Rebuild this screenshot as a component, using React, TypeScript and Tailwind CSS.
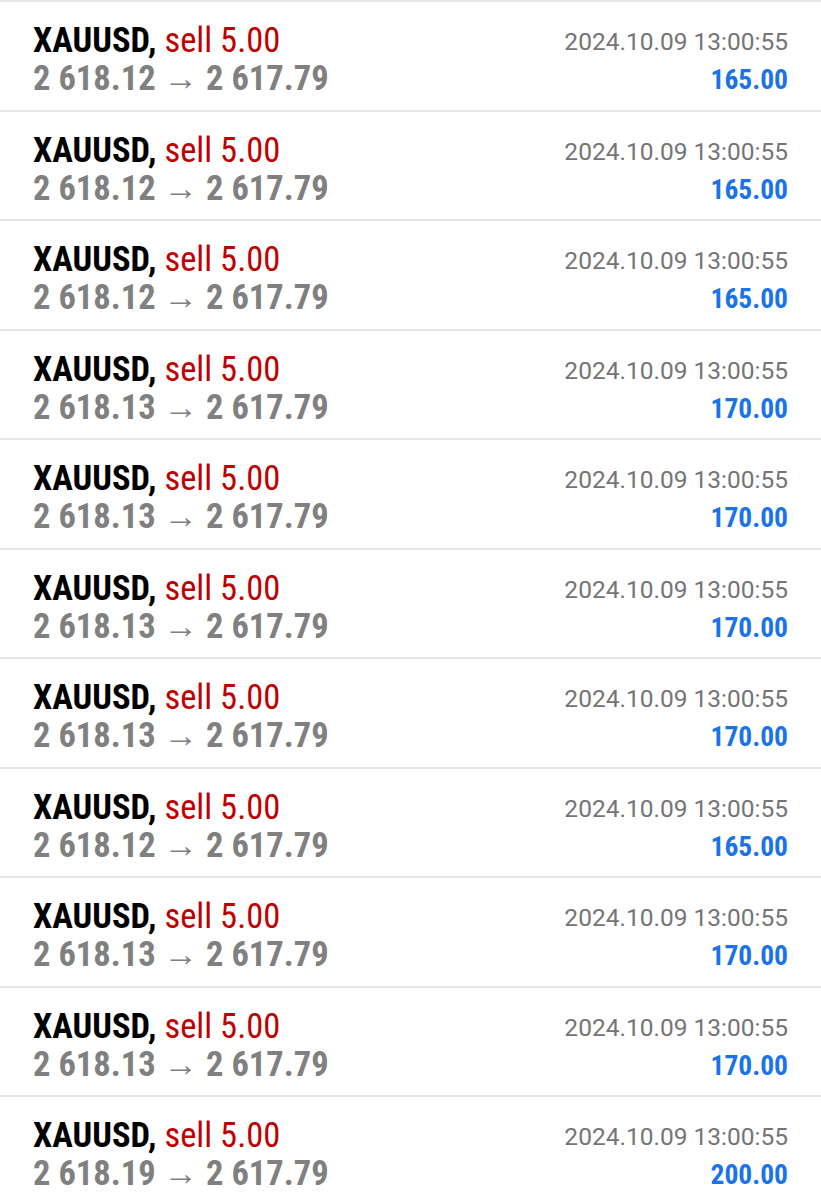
import React from "react";

const rows = [
  ["2 618.12", "165.00"],
  ["2 618.12", "165.00"],
  ["2 618.12", "165.00"],
  ["2 618.13", "170.00"],
  ["2 618.13", "170.00"],
  ["2 618.13", "170.00"],
  ["2 618.13", "170.00"],
  ["2 618.12", "165.00"],
  ["2 618.13", "170.00"],
  ["2 618.13", "170.00"],
  ["2 618.19", "200.00"],
];

export default function App() {
  return (
    <div className="w-[821px] h-[1200px] overflow-hidden bg-white border-t-2 border-[#e6e6e6]" style={{ fontFamily: "'Roboto Condensed', Roboto, sans-serif" }}>
      {rows.map(([open, profit], i) => (
        <div key={i} className="h-[109.5px] border-b-2 border-[#e6e6e6] flex justify-between px-[33px] pt-[18px]">
          <div className="flex flex-col">
            <div className="text-[34.5px] leading-[40px] whitespace-nowrap">
              <span className="font-bold text-black">XAUUSD,</span>{" "}
              <span className="text-[#c00000]">sell 5.00</span>
            </div>
            <div className="text-[34.5px] leading-[37px] font-bold text-[#808080] whitespace-nowrap">
              {open} → 2 617.79
            </div>
          </div>
          <div className="flex flex-col items-end">
            <div className="text-[24.5px] leading-[40px] pt-[2px] text-[#757575] whitespace-nowrap font-['Roboto',sans-serif]">2024.10.09 13:00:55</div>
            <div className="text-[27.5px] leading-[36px] font-bold text-[#1a73e8] whitespace-nowrap">{profit}</div>
          </div>
        </div>
      ))}
    </div>
  );
}
